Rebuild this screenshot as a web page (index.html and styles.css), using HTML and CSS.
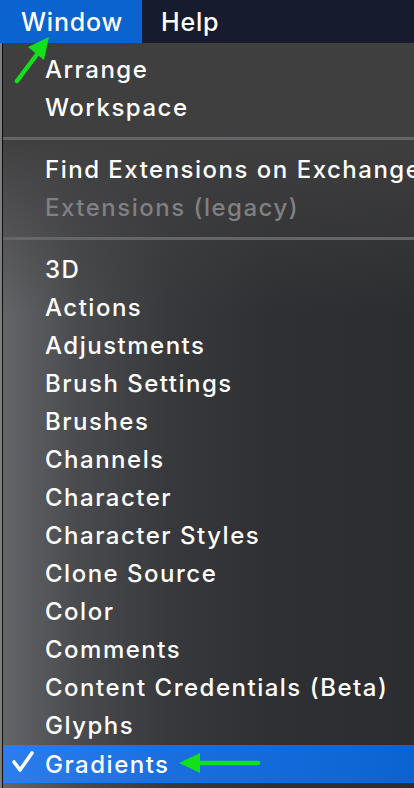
FILE: index.html
```html
<!DOCTYPE html>
<html lang="en">
<head>
  <meta charset="UTF-8" />
  <meta name="viewport" content="width=device-width, initial-scale=1" />
  <title>Window menu</title>
  <link rel="stylesheet" href="styles.css">
</head>
<body>

<div class="screen">
  <div class="menubar">
    <div class="menubar-item active">Window</div>
    <div class="menubar-item">Help</div>
  </div>

  <div class="menu">
    <div class="group">
      <div class="item"><span class="mark"></span>Arrange</div>
      <div class="item"><span class="mark"></span>Workspace</div>
    </div>
    <div class="sep"></div>
    <div class="group">
      <div class="item"><span class="mark"></span>Find Extensions on Exchange</div>
      <div class="item disabled"><span class="mark"></span>Extensions (legacy)</div>
    </div>
    <div class="sep"></div>
    <div class="group">
      <div class="item"><span class="mark"></span>3D</div>
      <div class="item"><span class="mark"></span>Actions</div>
      <div class="item"><span class="mark"></span>Adjustments</div>
      <div class="item"><span class="mark"></span>Brush Settings</div>
      <div class="item"><span class="mark"></span>Brushes</div>
      <div class="item"><span class="mark"></span>Channels</div>
      <div class="item"><span class="mark"></span>Character</div>
      <div class="item"><span class="mark"></span>Character Styles</div>
      <div class="item"><span class="mark"></span>Clone Source</div>
      <div class="item"><span class="mark"></span>Color</div>
      <div class="item"><span class="mark"></span>Comments</div>
      <div class="item"><span class="mark"></span>Content Credentials (Beta)</div>
      <div class="item"><span class="mark"></span>Glyphs</div>
      <div class="item selected">
        <span class="mark">
          <svg width="42" height="38" viewBox="0 0 42 38">
            <polyline points="11,17 17,25 29,8" fill="none" stroke="#fff" stroke-width="3.6" stroke-linecap="round" stroke-linejoin="round"/>
          </svg>
        </span>Gradients
      </div>
    </div>
  </div>

  <!-- green annotation arrows -->
  <svg class="arrow arrow-up" width="50" height="56" viewBox="0 0 50 56">
    <line x1="3" y1="48" x2="24" y2="20" stroke="#12e01a" stroke-width="4.5" stroke-linecap="round"/>
    <polygon points="35,4 14,14 30,27" fill="#12e01a"/>
  </svg>
  <svg class="arrow arrow-left" width="84" height="26" viewBox="0 0 84 26">
    <line x1="18" y1="13" x2="80" y2="13" stroke="#12e01a" stroke-width="4.5" stroke-linecap="round"/>
    <polygon points="1,13 22,3 22,23" fill="#12e01a"/>
  </svg>
</div>

</body>
</html>
```

FILE: styles.css
```css
body {
  margin: 0;
  background: #2a2a2a;
  font-family: Inter, "Liberation Sans", sans-serif;
  font-weight: 500;
  color: #fff;
}
.screen {
  position: relative;
  width: 414px;
  height: 788px;
  overflow: hidden;
  background: #7e7e7e;
}
.menubar {
  display: flex;
  height: 43px;
  background: #161c2d;
  font-size: 25px;
  letter-spacing: 0.8px;
}
.menubar-item {
  display: flex;
  align-items: center;
  padding: 0 19px;
}
.menubar-item.active {
  background: #0b63d0;
  width: 102px;
  padding-left: 21px;
}
.menu {
  margin-left: 2px;
  border-left: 1px solid #0e0e0f;
  height: 745px;
  padding-top: 7px;
  box-sizing: border-box;
  font-size: 24px;
  letter-spacing: 1.5px;
  background:
    linear-gradient(to bottom, #3f3f40 0, #3f3f40 90px, rgba(63, 63, 64, 0) 270px),
    linear-gradient(to right, #646568 0%, #4a4b4e 18%, #38393c 40%, #2f3033 65%, #2c2d30 100%);
}
.item {
  display: flex;
  align-items: center;
  height: 38px;
  white-space: nowrap;
}
.item.disabled {
  color: #808082;
}
.item.selected {
  margin-top: 1px;
  background: linear-gradient(to right, #2c7ded 0%, #1a6fe0 40%, #0b63d1 100%);
}
.mark {
  flex: none;
  width: 42px;
  height: 38px;
}
.sep {
  height: 3px;
  margin: 11px 0 10px;
  background: #666668;
}
.arrow {
  position: absolute;
}
.arrow-up {
  left: 14px;
  top: 33px;
}
.arrow-left {
  left: 178px;
  top: 750px;
}
```
